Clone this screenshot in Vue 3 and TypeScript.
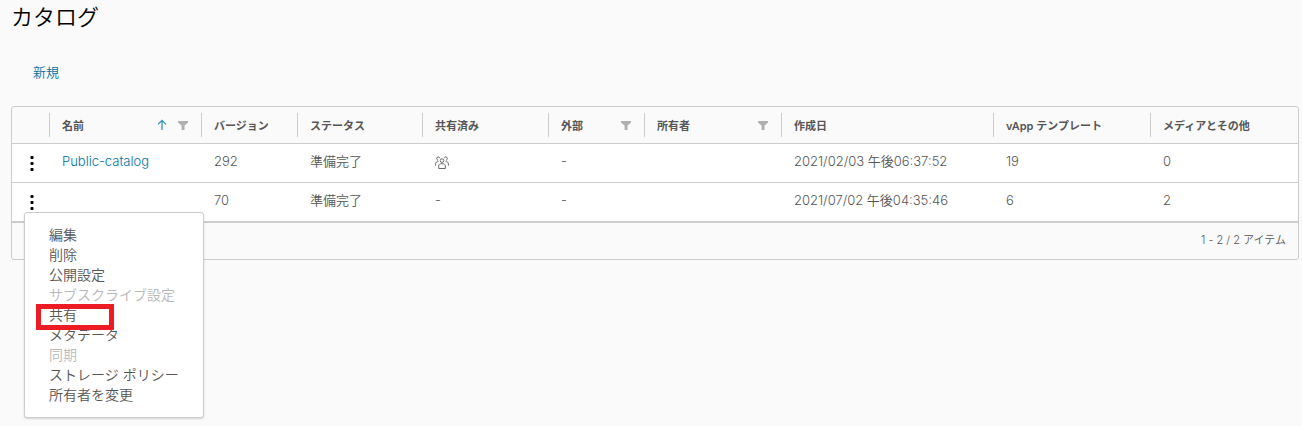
<script setup lang="ts">
interface Column {
  key: string
  label: string
  sorted?: boolean
  filter?: boolean
}

interface Catalog {
  name: string
  version: number
  status: string
  shared: boolean
  external: string
  owner: string
  created: string
  templates: number
  media: number
  menuOpen: boolean
}

interface MenuItem {
  label: string
  disabled?: boolean
  marked?: boolean
}

const columns: Column[] = [
  { key: 'name', label: '名前', sorted: true, filter: true },
  { key: 'version', label: 'バージョン' },
  { key: 'status', label: 'ステータス' },
  { key: 'shared', label: '共有済み' },
  { key: 'external', label: '外部', filter: true },
  { key: 'owner', label: '所有者', filter: true },
  { key: 'created', label: '作成日' },
  { key: 'templates', label: 'vApp テンプレート' },
  { key: 'media', label: 'メディアとその他' },
]

const catalogs: Catalog[] = [
  { name: 'Public-catalog', version: 292, status: '準備完了', shared: true, external: '-', owner: '', created: '2021/02/03 午後06:37:52', templates: 19, media: 0, menuOpen: false },
  { name: '', version: 70, status: '準備完了', shared: false, external: '-', owner: '', created: '2021/07/02 午後04:35:46', templates: 6, media: 2, menuOpen: true },
]

const menuItems: MenuItem[] = [
  { label: '編集' },
  { label: '削除' },
  { label: '公開設定' },
  { label: 'サブスクライブ設定', disabled: true },
  { label: '共有', marked: true },
  { label: 'メタデータ' },
  { label: '同期', disabled: true },
  { label: 'ストレージ ポリシー' },
  { label: '所有者を変更' },
]
</script>

<template>
  <main class="page" lang="ja">
    <h1 class="title">カタログ</h1>
    <div class="actions">
      <button type="button" class="new">新規</button>
    </div>

    <section class="grid">
      <table>
        <colgroup>
          <col class="c-menu" />
          <col v-for="c in columns" :key="c.key" :class="'c-' + c.key" />
        </colgroup>
        <thead>
          <tr>
            <th class="menu-head"></th>
            <th v-for="c in columns" :key="c.key" scope="col">
              <div class="head">
                <span class="label">{{ c.label }}</span>
                <button v-if="c.sorted" type="button" class="icon" aria-label="並べ替え">
                  <svg width="10" height="12" viewBox="0 0 10 12" fill="none" stroke="#3a94b8" stroke-width="1.3">
                    <path d="M5 11V1.6M1 5.4L5 1.4l4 4" />
                  </svg>
                </button>
                <button v-if="c.filter" type="button" class="icon" aria-label="フィルタ">
                  <svg width="10" height="9" viewBox="0 0 10 9" fill="#b0b0b0">
                    <path d="M0 0h10v1.400L6.500 4.600V9H3.600V4.600L0 1.400z" />
                  </svg>
                </button>
              </div>
            </th>
          </tr>
        </thead>
        <tbody>
          <tr v-for="row in catalogs" :key="row.version">
            <td class="menu-cell">
              <button type="button" class="kebab" aria-label="操作" :aria-expanded="row.menuOpen">
                <svg width="4" height="16" viewBox="0 0 4 16" fill="#000">
                  <rect x="0.5" y="1" width="3" height="3" rx="0.8" />
                  <rect x="0.5" y="7" width="3" height="3" rx="0.8" />
                  <rect x="0.5" y="13" width="3" height="3" rx="0.8" />
                </svg>
              </button>
              <ul v-if="row.menuOpen" class="menu">
                <li v-for="item in menuItems" :key="item.label" :class="{ marked: item.marked }">
                  <button type="button" :disabled="item.disabled">{{ item.label }}</button>
                </li>
              </ul>
            </td>
            <td><a v-if="row.name" href="#">{{ row.name }}</a></td>
            <td>{{ row.version }}</td>
            <td>{{ row.status }}</td>
            <td>
              <svg v-if="row.shared" class="people" role="img" aria-label="共有済み" width="14" height="14" viewBox="0 0 14 14" fill="none" stroke="#6a6a6a" stroke-width="1">
                <circle cx="7" cy="4.600" r="1.800" />
                <path d="M3.700 12.500V9.900C3.700 8.300 5 7.700 7 7.700s3.300.6 3.300 2.200v2.600z" />
                <path d="M4.800 2.300C4.400.4 1.900.4 1.700 2.400c0 1 .5 1.800 1.400 2.200M9.200 2.300c.4-1.900 2.900-1.900 3.100.1 0 1-.5 1.800-1.400 2.200" />
                <path d="M3.400 5.600C1.500 5.700.6 6.500.6 7.700v2M10.600 5.600c1.900.1 2.800.9 2.800 2.100v2" />
              </svg>
              <template v-else>-</template>
            </td>
            <td>{{ row.external }}</td>
            <td>{{ row.owner }}</td>
            <td>{{ row.created }}</td>
            <td>{{ row.templates }}</td>
            <td>{{ row.media }}</td>
          </tr>
        </tbody>
      </table>
      <footer class="foot">1 - 2 / 2 アイテム</footer>
    </section>
  </main>
</template>

<style>
body {
  background: #fafafa;
}
</style>

<style scoped>
.page {
  min-height: 100vh;
  box-sizing: border-box;
  padding: 4px 3px 0 11px;
  color: #565656;
  font-family: Inter, "Noto Sans CJK JP", sans-serif;
  font-size: 13px;
  font-weight: 350;
}

button {
  margin: 0;
  padding: 0;
  border: 0;
  background: none;
  color: inherit;
  font: inherit;
}

.title {
  margin: 0;
  color: #000;
  font-size: 22px;
  font-weight: 350;
  line-height: 26px;
}

.actions {
  padding: 32px 22px 24px;
}

.new {
  display: block;
  color: #0072a3;
  line-height: 20px;
}

.grid {
  border: 1px solid #ccc;
  border-radius: 3px;
}

table {
  width: 100%;
  table-layout: fixed;
  border-collapse: separate;
  border-spacing: 0;
}

.c-menu { width: 37px; }
.c-name { width: 152px; }
.c-version { width: 96px; }
.c-status { width: 125px; }
.c-shared { width: 126px; }
.c-external { width: 96px; }
.c-owner { width: 137px; }
.c-created { width: 212px; }
.c-templates { width: 157px; }

th {
  height: 36px;
  padding: 0;
  border-bottom: 1px solid #ccc;
  text-align: left;
  font-size: 11px;
  font-weight: 600;
}

.head {
  display: flex;
  align-items: center;
  gap: 11px;
  height: 24px;
  padding: 0 13px 0 12px;
  border-left: 1px solid #ccc;
  white-space: nowrap;
}

.label {
  flex: 1;
}

.icon,
.icon svg {
  display: block;
}

td {
  height: 39px;
  padding: 7px 13px 11px;
  box-sizing: border-box;
  border-bottom: 1px solid #ccc;
  background: #fff;
  line-height: 20px;
  white-space: nowrap;
}

a {
  color: #0072a3;
  text-decoration: none;
}

.people {
  display: block;
  margin-top: 4px;
}

.menu-cell {
  position: relative;
  padding: 9px 0 9px 18px;
}

.kebab,
.kebab svg {
  display: block;
}

.menu {
  position: absolute;
  z-index: 1;
  top: 29px;
  left: 12px;
  width: 180px;
  box-sizing: border-box;
  margin: 0;
  padding: 12px 0;
  border: 1px solid #ccc;
  border-radius: 3px;
  background: #fff;
  box-shadow: 0 1px 2px rgba(0, 0, 0, 0.15);
  list-style: none;
  font-size: 14px;
}

.menu li {
  position: relative;
  height: 20px;
}

.menu button {
  display: block;
  width: 100%;
  padding: 0 24px;
  text-align: left;
  line-height: 20px;
}

.menu button:disabled {
  color: #b8b8b8;
}

.marked::after {
  content: "";
  position: absolute;
  z-index: 1;
  top: -1px;
  left: 11px;
  width: 78px;
  height: 26px;
  box-sizing: border-box;
  border: 5px solid #ed1c24;
}

.foot {
  padding: 7px 12px 9px;
  border-top: 1px solid #ccc;
  text-align: right;
  font-size: 11px;
  line-height: 20px;
}
</style>
